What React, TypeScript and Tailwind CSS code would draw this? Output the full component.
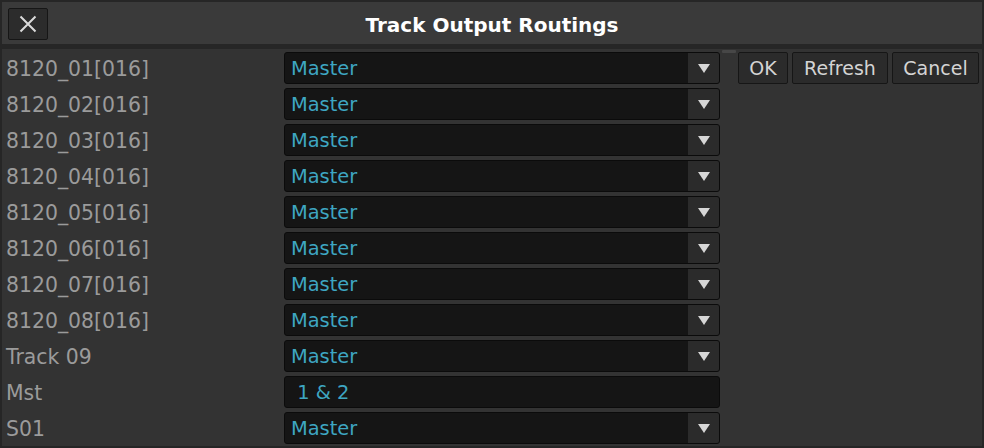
import React from "react";

const rows: { label: string; value: string; arrow: boolean }[] = [
  { label: "8120_01[016]", value: "Master", arrow: true },
  { label: "8120_02[016]", value: "Master", arrow: true },
  { label: "8120_03[016]", value: "Master", arrow: true },
  { label: "8120_04[016]", value: "Master", arrow: true },
  { label: "8120_05[016]", value: "Master", arrow: true },
  { label: "8120_06[016]", value: "Master", arrow: true },
  { label: "8120_07[016]", value: "Master", arrow: true },
  { label: "8120_08[016]", value: "Master", arrow: true },
  { label: "Track 09", value: "Master", arrow: true },
  { label: "Mst", value: "\u00a01 & 2", arrow: false },
  { label: "S01", value: "Master", arrow: true },
];

const font = { fontFamily: '"DejaVu Sans", "Noto Sans", sans-serif' };

function Row({ label, value, arrow }: { label: string; value: string; arrow: boolean }) {
  return (
    <div className="flex items-center h-[32px]">
      <div className="w-[282px] pl-[4px] pt-[2px] text-[20.4px] text-[#9b9b9b] leading-none">{label}</div>
      <div className="w-[436px] h-[32px] flex rounded-[3px] border border-[#0b0b0b] bg-[#151515] overflow-hidden">
        <div className="flex-1 flex items-center pl-[6px] pt-[2px] text-[19.4px] text-[#3ea6c2] leading-none">{value}</div>
        {arrow && (
          <div className="w-[31px] h-full bg-[#2b2b2b] flex items-center justify-center">
            <svg width="12" height="9" viewBox="0 0 12 9">
              <polygon points="0,0 12,0 6,9" fill="#d6d6d6" />
            </svg>
          </div>
        )}
      </div>
    </div>
  );
}

function Btn({ children, w }: { children: React.ReactNode; w: string }) {
  return (
    <div
      className={`${w} h-[32px] flex items-center justify-center pt-[1px] bg-[#2b2b2b] border border-[#161616] rounded-[2px] text-[19px] text-[#d4d4d4] leading-none`}
    >
      {children}
    </div>
  );
}

export default function App() {
  return (
    <div className="w-[984px] h-[448px] bg-[#262626] flex flex-col overflow-hidden" style={font}>
      <div className="mt-[2px] mx-[2px] h-[42px] bg-[#3a3a3a] relative flex items-center justify-center">
        <div className="absolute left-[6px] top-[6px] w-[40px] h-[32px] bg-[#2c2c2c] border border-[#161616] rounded-[2px] flex items-center justify-center">
          <svg width="18" height="18" viewBox="0 0 18 18">
            <path d="M1.5 1.5 L16.5 16.5 M16.5 1.5 L1.5 16.5" stroke="#dadada" strokeWidth="2" />
          </svg>
        </div>
        <div className="pt-[3px] text-[20px] font-bold text-white leading-none">Track Output Routings</div>
      </div>
      <div className="h-[5px]" />
      <div className="mx-[2px] mb-[2px] flex-1 bg-[#333333] relative flex pt-[3px]">
        <div className="absolute left-[720px] top-[1px] w-[14px] h-[3px] bg-[#474747] rounded-[1px]" />
        <div className="flex flex-col gap-[4px]">
          {rows.map((r) => (
            <Row key={r.label} {...r} />
          ))}
        </div>
        <div className="ml-[18px] flex gap-[4px] items-start">
          <Btn w="w-[50px]">OK</Btn>
          <Btn w="w-[96px]">Refresh</Btn>
          <Btn w="w-[87px]">Cancel</Btn>
        </div>
      </div>
    </div>
  );
}
